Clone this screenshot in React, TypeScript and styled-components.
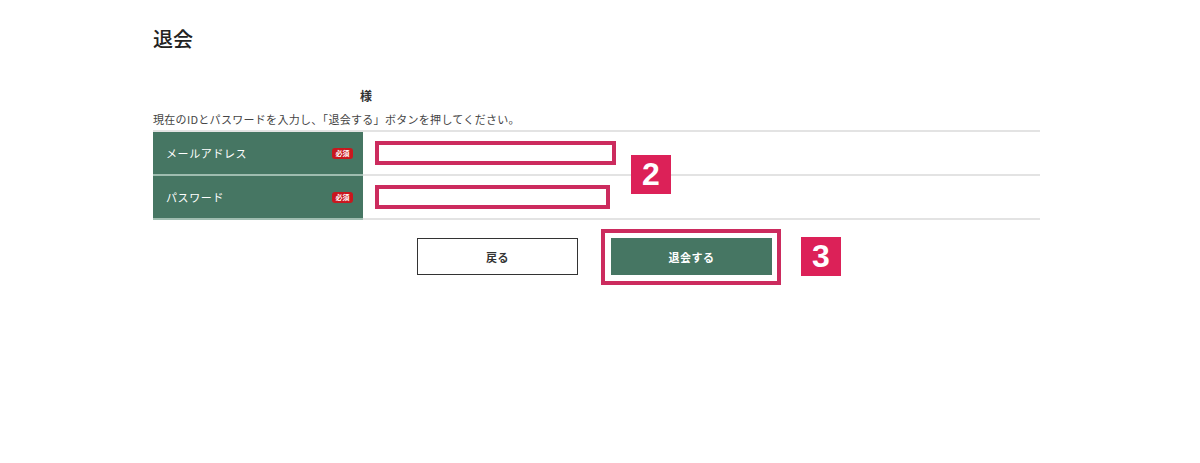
import React from "react";
import styled, { createGlobalStyle } from "styled-components";

const Global = createGlobalStyle`
  html, body { margin: 0; padding: 0; background: #fff; }
  body { font-family: "Noto Sans CJK JP", "Noto Sans", sans-serif; color: #333; }
`;

const Page = styled.div`
  width: 887px;
  margin-left: 153px;
  padding-top: 26px;
  padding-bottom: 60px;
`;

const Title = styled.h1`
  margin: 0;
  font-size: 20px;
  line-height: 26px;
  font-weight: 500;
  color: #222;
`;

const NameLine = styled.div`
  margin-top: 36px;
  padding-left: 207px;
  font-size: 12px;
  line-height: 16px;
  font-weight: 700;
  color: #333;
`;

const Lead = styled.p`
  margin: 8px 0 0;
  font-size: 11px;
  line-height: 14px;
  letter-spacing: 0.3px;
  color: #444;
`;

const Table = styled.div`
  position: relative;
  margin-top: 4px;
  border-top: 2px solid #e3e3e3;
`;

const Row = styled.div`
  display: grid;
  grid-template-columns: 210px 1fr;
  height: 42px;
  border-bottom: 2px solid #e3e3e3;
`;

const Label = styled.div`
  display: flex;
  align-items: center;
  justify-content: space-between;
  background: #467663;
  padding: 0 10px 0 13px;
  color: #fff;
  font-size: 11px;
  font-weight: 400;
  letter-spacing: 0.6px;
  margin-bottom: -2px;
  border-bottom: 2px solid #9fbdb0;
`;

const Required = styled.span`
  display: inline-flex;
  align-items: center;
  justify-content: center;
  width: 21px;
  height: 11px;
  border-radius: 3px;
  background: #c9171e;
  color: #fff;
  font-size: 7px;
  font-weight: 700;
  letter-spacing: 0;
`;

const Cell = styled.div`
  display: flex;
  align-items: center;
  padding-left: 12px;
`;

const Input = styled.input<{ $w: number }>`
  box-sizing: border-box;
  width: ${(p) => p.$w}px;
  height: 24px;
  border: 4px solid #cc2b5e;
  background: #fff;
  outline: none;
`;

const StepBadge = styled.div`
  position: absolute;
  width: 40px;
  height: 39px;
  background: #dc2158;
  color: #fff;
  font-family: "Liberation Sans", Arial, sans-serif;
  font-weight: 700;
  font-size: 32px;
  display: flex;
  align-items: center;
  justify-content: center;
`;

const StepTwo = styled(StepBadge)`
  left: 478px;
  top: 23px;
`;

const StepThree = styled(StepBadge)`
  left: calc(100% + 29px);
  top: -1px;
`;

const Buttons = styled.div`
  display: flex;
  justify-content: center;
  align-items: flex-start;
  gap: 33px;
  margin-top: 18px;
  padding-right: 4px;
`;

const Button = styled.button<{ $primary?: boolean }>`
  display: block;
  box-sizing: border-box;
  width: 161px;
  height: 37px;
  margin: 0;
  border: 1px solid ${(p) => (p.$primary ? "#467663" : "#333")};
  background: ${(p) => (p.$primary ? "#467663" : "#fff")};
  color: ${(p) => (p.$primary ? "#fff" : "#333")};
  font-family: "Noto Sans CJK JP", sans-serif;
  font-size: 11px;
  font-weight: 700;
  letter-spacing: 0.5px;
  cursor: pointer;
`;

const ButtonWrap = styled.div`
  position: relative;
  display: flex;
`;

const Highlight = styled.div`
  position: absolute;
  box-sizing: border-box;
  top: -9px;
  left: -10px;
  width: 180px;
  height: 56px;
  border: 4px solid #cc2b5e;
  pointer-events: none;
`;

export default function App() {
  return (
    <>
      <Global />
      <Page>
        <Title>退会</Title>
        <NameLine>様</NameLine>
        <Lead>現在のIDとパスワードを入力し、「退会する」ボタンを押してください。</Lead>
        <Table>
          <Row>
            <Label>
              メールアドレス<Required>必須</Required>
            </Label>
            <Cell>
              <Input $w={241} type="text" />
            </Cell>
          </Row>
          <Row>
            <Label>
              パスワード<Required>必須</Required>
            </Label>
            <Cell>
              <Input $w={235} type="password" />
            </Cell>
          </Row>
          <StepTwo>2</StepTwo>
        </Table>
        <Buttons>
          <Button>戻る</Button>
          <ButtonWrap>
            <Button $primary>退会する</Button>
            <Highlight />
            <StepThree>3</StepThree>
          </ButtonWrap>
        </Buttons>
      </Page>
    </>
  );
}
